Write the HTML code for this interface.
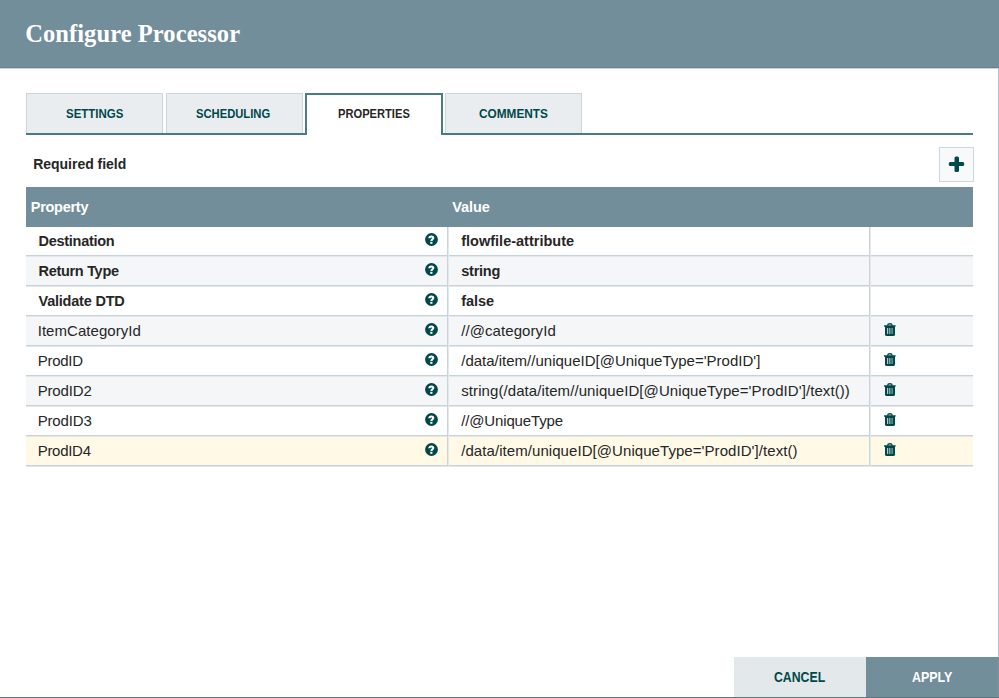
<!DOCTYPE html>
<html><head><meta charset="utf-8"><style>
*{box-sizing:border-box;margin:0;padding:0}
html,body{width:999px;height:698px;overflow:hidden;background:#fff;font-family:"Liberation Sans",sans-serif}
body{position:relative}
.a{position:absolute}
.tx{position:absolute;white-space:nowrap;line-height:0}
.tx i{display:inline-block;width:0;height:0}
#hdr{left:0;top:0;width:999px;height:68px;background:#728e9b}
#hdrl{left:0;top:67px;width:999px;height:1px;background:#68838f}
#rline{left:998px;top:68px;width:1px;height:630px;background:#b5c0c6}
#bline{left:0;top:697px;width:999px;height:1px;background:#65737b}
.tab{top:93px;height:41px;width:137px;background:#e9edf0;border:1px solid #cad8d9;border-bottom:none}
#tabline{left:26px;top:133px;width:947px;height:2px;background:#487c7e}
#tsel{left:305px;top:93px;width:138px;height:42px;background:#fff;border:2px solid #487c7e;border-bottom:none;border-radius:0}
#plus{left:939px;top:147px;width:35px;height:35px;background:#f7f9fa;border:1px solid #cdd8dc}
#thead{left:26px;top:187px;width:947px;height:40px;background:#728e9b}
.row{left:26px;width:947px;height:30px}
.alt{background:#f4f6f7}
.hl{background:#fff9e6}
.sep{left:26px;width:947px;height:2px;background:linear-gradient(#c6d1d8 50%,#e2e8eb 50%)}
.vl{width:2px;background:linear-gradient(90deg,#c9d4da 50%,#e3e9ec 50%)}
.help{position:absolute;width:13px;height:13px}
.trash{position:absolute;width:14px;height:16px}
#bcancel{left:734px;top:657px;width:132px;height:40px;background:#e3e8eb}
#bapply{left:866px;top:657px;width:132px;height:40px;background:#728e9b}
</style></head><body>
<div id="hdr" class="a"></div><div id="hdrl" class="a"></div><div class="a" style="left:0;top:68px;width:998px;height:1px;background:#c9d2d6"></div>
<div id="rline" class="a"></div><div id="bline" class="a"></div>
<div class="tab a" style="left:26px"></div><div class="tab a" style="left:166px"></div><div class="tab a" style="left:445px"></div>
<div id="tabline" class="a"></div><div id="tsel" class="a"></div>
<div id="plus" class="a"><svg width="33" height="33" viewBox="0 0 33 33" style="position:absolute;left:0;top:0"><rect x="14.5" y="8.4" width="4.5" height="15.6" rx="1.6" fill="#004849"/><rect x="8.8" y="13.9" width="15.4" height="4.2" rx="1.6" fill="#004849"/></svg></div>
<div id="thead" class="a"></div>
<div class="row a" style="top:227px"></div>
<div class="sep a" style="top:255px"></div>
<svg class="help" style="left:424.9px;top:233.25px" viewBox="0 0 13 13"><circle cx="6.5" cy="6.5" r="6.4" fill="#004849"/><path d="M4.3 5.3C4.3 3.9 5.3 3.4 6.45 3.4C7.6 3.4 8.3 4.1 8.3 5.0C8.3 6.3 6.35 6.4 6.35 7.9" fill="none" stroke="#fff" stroke-width="2.0"/><rect x="5.25" y="8.8" width="2.2" height="1.95" fill="#fff"/></svg>
<div class="row a alt" style="top:257px"></div>
<div class="sep a" style="top:285px"></div>
<svg class="help" style="left:424.9px;top:263.25px" viewBox="0 0 13 13"><circle cx="6.5" cy="6.5" r="6.4" fill="#004849"/><path d="M4.3 5.3C4.3 3.9 5.3 3.4 6.45 3.4C7.6 3.4 8.3 4.1 8.3 5.0C8.3 6.3 6.35 6.4 6.35 7.9" fill="none" stroke="#fff" stroke-width="2.0"/><rect x="5.25" y="8.8" width="2.2" height="1.95" fill="#fff"/></svg>
<div class="row a" style="top:287px"></div>
<div class="sep a" style="top:315px"></div>
<svg class="help" style="left:424.9px;top:293.25px" viewBox="0 0 13 13"><circle cx="6.5" cy="6.5" r="6.4" fill="#004849"/><path d="M4.3 5.3C4.3 3.9 5.3 3.4 6.45 3.4C7.6 3.4 8.3 4.1 8.3 5.0C8.3 6.3 6.35 6.4 6.35 7.9" fill="none" stroke="#fff" stroke-width="2.0"/><rect x="5.25" y="8.8" width="2.2" height="1.95" fill="#fff"/></svg>
<div class="row a alt" style="top:317px"></div>
<div class="sep a" style="top:345px"></div>
<svg class="help" style="left:424.9px;top:323.25px" viewBox="0 0 13 13"><circle cx="6.5" cy="6.5" r="6.4" fill="#004849"/><path d="M4.3 5.3C4.3 3.9 5.3 3.4 6.45 3.4C7.6 3.4 8.3 4.1 8.3 5.0C8.3 6.3 6.35 6.4 6.35 7.9" fill="none" stroke="#fff" stroke-width="2.0"/><rect x="5.25" y="8.8" width="2.2" height="1.95" fill="#fff"/></svg>
<svg class="trash" style="left:883px;top:322px" viewBox="0 0 14 16"><path d="M4.5 3.6C4.7 2.1 5.4 1.75 6.9 1.75C8.4 1.75 9.1 2.1 9.3 3.6" fill="none" stroke="#004849" stroke-width="1.3"/><path d="M0.9 3.2H12.8L12.2 4.9H1.5Z" fill="#004849"/><path d="M2 4.8H12V12.4Q12 14.1 10.3 14.1H3.7Q2 14.1 2 12.4Z" fill="#004849"/><rect x="4" y="6" width="1.2" height="6" fill="#fff" opacity="0.7"/><rect x="6.2" y="6" width="1.2" height="6" fill="#fff" opacity="0.65"/><rect x="8.4" y="6" width="1.4" height="6" fill="#fff" opacity="0.45"/></svg>
<div class="row a" style="top:347px"></div>
<div class="sep a" style="top:375px"></div>
<svg class="help" style="left:424.9px;top:353.25px" viewBox="0 0 13 13"><circle cx="6.5" cy="6.5" r="6.4" fill="#004849"/><path d="M4.3 5.3C4.3 3.9 5.3 3.4 6.45 3.4C7.6 3.4 8.3 4.1 8.3 5.0C8.3 6.3 6.35 6.4 6.35 7.9" fill="none" stroke="#fff" stroke-width="2.0"/><rect x="5.25" y="8.8" width="2.2" height="1.95" fill="#fff"/></svg>
<svg class="trash" style="left:883px;top:352px" viewBox="0 0 14 16"><path d="M4.5 3.6C4.7 2.1 5.4 1.75 6.9 1.75C8.4 1.75 9.1 2.1 9.3 3.6" fill="none" stroke="#004849" stroke-width="1.3"/><path d="M0.9 3.2H12.8L12.2 4.9H1.5Z" fill="#004849"/><path d="M2 4.8H12V12.4Q12 14.1 10.3 14.1H3.7Q2 14.1 2 12.4Z" fill="#004849"/><rect x="4" y="6" width="1.2" height="6" fill="#fff" opacity="0.7"/><rect x="6.2" y="6" width="1.2" height="6" fill="#fff" opacity="0.65"/><rect x="8.4" y="6" width="1.4" height="6" fill="#fff" opacity="0.45"/></svg>
<div class="row a alt" style="top:377px"></div>
<div class="sep a" style="top:405px"></div>
<svg class="help" style="left:424.9px;top:383.25px" viewBox="0 0 13 13"><circle cx="6.5" cy="6.5" r="6.4" fill="#004849"/><path d="M4.3 5.3C4.3 3.9 5.3 3.4 6.45 3.4C7.6 3.4 8.3 4.1 8.3 5.0C8.3 6.3 6.35 6.4 6.35 7.9" fill="none" stroke="#fff" stroke-width="2.0"/><rect x="5.25" y="8.8" width="2.2" height="1.95" fill="#fff"/></svg>
<svg class="trash" style="left:883px;top:382px" viewBox="0 0 14 16"><path d="M4.5 3.6C4.7 2.1 5.4 1.75 6.9 1.75C8.4 1.75 9.1 2.1 9.3 3.6" fill="none" stroke="#004849" stroke-width="1.3"/><path d="M0.9 3.2H12.8L12.2 4.9H1.5Z" fill="#004849"/><path d="M2 4.8H12V12.4Q12 14.1 10.3 14.1H3.7Q2 14.1 2 12.4Z" fill="#004849"/><rect x="4" y="6" width="1.2" height="6" fill="#fff" opacity="0.7"/><rect x="6.2" y="6" width="1.2" height="6" fill="#fff" opacity="0.65"/><rect x="8.4" y="6" width="1.4" height="6" fill="#fff" opacity="0.45"/></svg>
<div class="row a" style="top:407px"></div>
<div class="sep a" style="top:435px"></div>
<svg class="help" style="left:424.9px;top:413.25px" viewBox="0 0 13 13"><circle cx="6.5" cy="6.5" r="6.4" fill="#004849"/><path d="M4.3 5.3C4.3 3.9 5.3 3.4 6.45 3.4C7.6 3.4 8.3 4.1 8.3 5.0C8.3 6.3 6.35 6.4 6.35 7.9" fill="none" stroke="#fff" stroke-width="2.0"/><rect x="5.25" y="8.8" width="2.2" height="1.95" fill="#fff"/></svg>
<svg class="trash" style="left:883px;top:412px" viewBox="0 0 14 16"><path d="M4.5 3.6C4.7 2.1 5.4 1.75 6.9 1.75C8.4 1.75 9.1 2.1 9.3 3.6" fill="none" stroke="#004849" stroke-width="1.3"/><path d="M0.9 3.2H12.8L12.2 4.9H1.5Z" fill="#004849"/><path d="M2 4.8H12V12.4Q12 14.1 10.3 14.1H3.7Q2 14.1 2 12.4Z" fill="#004849"/><rect x="4" y="6" width="1.2" height="6" fill="#fff" opacity="0.7"/><rect x="6.2" y="6" width="1.2" height="6" fill="#fff" opacity="0.65"/><rect x="8.4" y="6" width="1.4" height="6" fill="#fff" opacity="0.45"/></svg>
<div class="row a alt hl" style="top:437px"></div>
<div class="sep a" style="top:465px"></div>
<svg class="help" style="left:424.9px;top:443.25px" viewBox="0 0 13 13"><circle cx="6.5" cy="6.5" r="6.4" fill="#004849"/><path d="M4.3 5.3C4.3 3.9 5.3 3.4 6.45 3.4C7.6 3.4 8.3 4.1 8.3 5.0C8.3 6.3 6.35 6.4 6.35 7.9" fill="none" stroke="#fff" stroke-width="2.0"/><rect x="5.25" y="8.8" width="2.2" height="1.95" fill="#fff"/></svg>
<svg class="trash" style="left:883px;top:442px" viewBox="0 0 14 16"><path d="M4.5 3.6C4.7 2.1 5.4 1.75 6.9 1.75C8.4 1.75 9.1 2.1 9.3 3.6" fill="none" stroke="#004849" stroke-width="1.3"/><path d="M0.9 3.2H12.8L12.2 4.9H1.5Z" fill="#004849"/><path d="M2 4.8H12V12.4Q12 14.1 10.3 14.1H3.7Q2 14.1 2 12.4Z" fill="#004849"/><rect x="4" y="6" width="1.2" height="6" fill="#fff" opacity="0.7"/><rect x="6.2" y="6" width="1.2" height="6" fill="#fff" opacity="0.65"/><rect x="8.4" y="6" width="1.4" height="6" fill="#fff" opacity="0.45"/></svg>
<div class="vl a" style="left:447px;top:227px;height:239px"></div>
<div class="vl a" style="left:869px;top:227px;height:239px"></div>
<div id="bcancel" class="a"></div><div id="bapply" class="a"></div>
<div class="a" style="left:998px;top:657px;width:1px;height:40px;background:#80929b"></div>
<div class="tx" id="title" style="left:25.20px;top:34.00px;font-family:'Liberation Serif',serif;font-weight:bold;font-size:24.5px;color:#fff;letter-spacing:0.079px">Configure Processor</div>
<div class="tx" id="t1" style="left:65.76px;top:114.31px;font-family:'Liberation Sans',sans-serif;font-weight:bold;font-size:13px;color:#004849;letter-spacing:0.000px;transform:scaleX(0.8831);transform-origin:0 0">SETTINGS</div>
<div class="tx" id="t2" style="left:196.48px;top:114.31px;font-family:'Liberation Sans',sans-serif;font-weight:bold;font-size:13px;color:#004849;letter-spacing:0.000px;transform:scaleX(0.8628);transform-origin:0 0">SCHEDULING</div>
<div class="tx" id="t3" style="left:337.74px;top:114.31px;font-family:'Liberation Sans',sans-serif;font-weight:bold;font-size:13px;color:#262626;letter-spacing:0.000px;transform:scaleX(0.8573);transform-origin:0 0">PROPERTIES</div>
<div class="tx" id="t4" style="left:479.00px;top:114.31px;font-family:'Liberation Sans',sans-serif;font-weight:bold;font-size:13px;color:#004849;letter-spacing:0.000px;transform:scaleX(0.9094);transform-origin:0 0">COMMENTS</div>
<div class="tx" id="req" style="left:33.20px;top:163.71px;font-family:'Liberation Sans',sans-serif;font-weight:bold;font-size:14px;color:#262626;letter-spacing:-0.023px">Required field</div>
<div class="tx" id="hp" style="left:30.72px;top:206.60px;font-family:'Liberation Sans',sans-serif;font-weight:bold;font-size:14.5px;color:#fff;letter-spacing:-0.264px">Property</div>
<div class="tx" id="hv" style="left:452.22px;top:207.00px;font-family:'Liberation Sans',sans-serif;font-weight:bold;font-size:14.5px;color:#fff;letter-spacing:-0.079px">Value</div>
<div class="tx" id="cancel" style="left:774.48px;top:676.71px;font-family:'Liberation Sans',sans-serif;font-weight:bold;font-size:14px;color:#004849;letter-spacing:0.000px;transform:scaleX(0.8771);transform-origin:0 0">CANCEL</div>
<div class="tx" id="apply" style="left:911.98px;top:676.71px;font-family:'Liberation Sans',sans-serif;font-weight:bold;font-size:14px;color:#fff;letter-spacing:0.000px;transform:scaleX(0.8882);transform-origin:0 0">APPLY</div>
<div class="tx" id="r0a" style="left:38.48px;top:240.72px;font-family:'Liberation Sans',sans-serif;font-weight:bold;font-size:14.5px;color:#262626;letter-spacing:-0.270px">Destination</div>
<div class="tx" id="r0b" style="left:461.24px;top:240.72px;font-family:'Liberation Sans',sans-serif;font-weight:bold;font-size:14.5px;color:#262626;letter-spacing:0.002px">flowfile-attribute</div>
<div class="tx" id="r1a" style="left:38.48px;top:270.72px;font-family:'Liberation Sans',sans-serif;font-weight:bold;font-size:14.5px;color:#262626;letter-spacing:-0.298px">Return Type</div>
<div class="tx" id="r1b" style="left:461.24px;top:270.72px;font-family:'Liberation Sans',sans-serif;font-weight:bold;font-size:14.5px;color:#262626;letter-spacing:-0.238px">string</div>
<div class="tx" id="r2a" style="left:38.48px;top:300.72px;font-family:'Liberation Sans',sans-serif;font-weight:bold;font-size:14.5px;color:#262626;letter-spacing:-0.213px">Validate DTD</div>
<div class="tx" id="r2b" style="left:461.24px;top:300.72px;font-family:'Liberation Sans',sans-serif;font-weight:bold;font-size:14.5px;color:#262626;letter-spacing:-0.055px">false</div>
<div class="tx" id="r3a" style="left:37.68px;top:330.72px;font-family:'Liberation Sans',sans-serif;font-weight:normal;font-size:15px;color:#262626;letter-spacing:0.048px">ItemCategoryId</div>
<div class="tx" id="r3b" style="left:461.24px;top:330.72px;font-family:'Liberation Sans',sans-serif;font-weight:normal;font-size:15px;color:#262626;letter-spacing:0.076px">//@categoryId</div>
<div class="tx" id="r4a" style="left:37.68px;top:360.72px;font-family:'Liberation Sans',sans-serif;font-weight:normal;font-size:15px;color:#262626;letter-spacing:-0.261px">ProdID</div>
<div class="tx" id="r4b" style="left:461.24px;top:360.72px;font-family:'Liberation Sans',sans-serif;font-weight:normal;font-size:15px;color:#262626;letter-spacing:0.001px">/data/item//uniqueID[@UniqueType='ProdID']</div>
<div class="tx" id="r5a" style="left:37.68px;top:390.72px;font-family:'Liberation Sans',sans-serif;font-weight:normal;font-size:15px;color:#262626;letter-spacing:-0.150px">ProdID2</div>
<div class="tx" id="r5b" style="left:461.24px;top:390.72px;font-family:'Liberation Sans',sans-serif;font-weight:normal;font-size:15px;color:#262626;letter-spacing:0.081px">string(/data/item//uniqueID[@UniqueType='ProdID']/text())</div>
<div class="tx" id="r6a" style="left:37.68px;top:420.72px;font-family:'Liberation Sans',sans-serif;font-weight:normal;font-size:15px;color:#262626;letter-spacing:-0.150px">ProdID3</div>
<div class="tx" id="r6b" style="left:461.24px;top:420.72px;font-family:'Liberation Sans',sans-serif;font-weight:normal;font-size:15px;color:#262626;letter-spacing:-0.152px">//@UniqueType</div>
<div class="tx" id="r7a" style="left:37.68px;top:450.72px;font-family:'Liberation Sans',sans-serif;font-weight:normal;font-size:15px;color:#262626;letter-spacing:-0.283px">ProdID4</div>
<div class="tx" id="r7b" style="left:461.24px;top:450.72px;font-family:'Liberation Sans',sans-serif;font-weight:normal;font-size:15px;color:#262626;letter-spacing:0.065px">/data/item/uniqueID[@UniqueType='ProdID']/text()</div>
</body></html>
